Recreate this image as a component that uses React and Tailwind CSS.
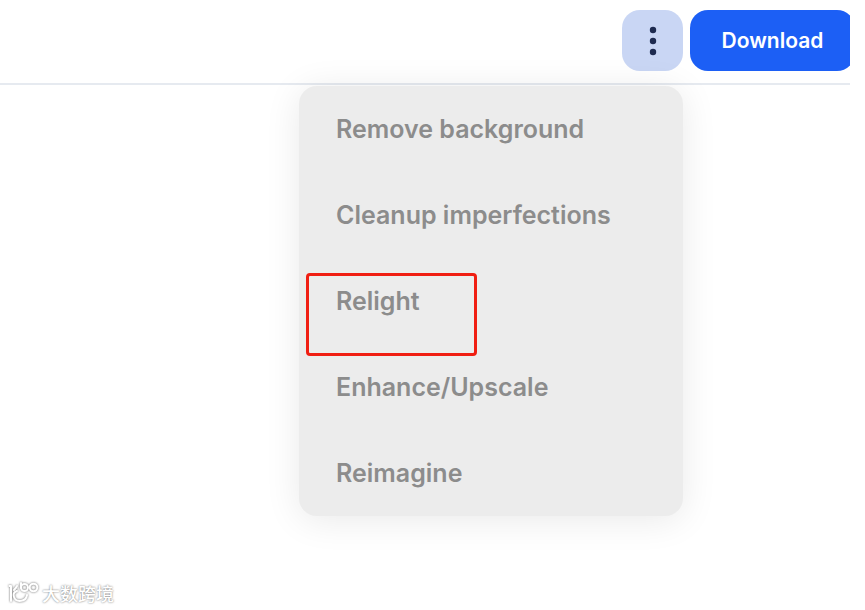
import React from 'react';

const menuItems = [
  "Remove background",
  "Cleanup imperfections",
  "Relight",
  "Enhance/Upscale",
  "Reimagine"
];

function DotsIcon() {
  return (
    <svg width="8" height="30" viewBox="0 0 8 30" fill="#1e2b50" aria-hidden="true">
      <circle cx="4" cy="4" r="3.2" />
      <circle cx="4" cy="15" r="3.2" />
      <circle cx="4" cy="26" r="3.2" />
    </svg>
  );
}

function ActionsMenu() {
  return (
    <ul className="absolute right-0 top-full mt-[15px] w-[384px] rounded-[18px] bg-[#ececec] shadow-[0_4px_36px_rgba(0,0,0,0.09)]">
      {menuItems.map((item) => (
        <li key={item} className="relative">
          <button
            type="button"
            className="flex h-[86px] w-full items-center pl-[37px] pt-0.5 text-left text-[25px] font-semibold text-[#8c8c8c]"
          >
            {item}
          </button>
          {item === "Relight" && (
            <span className="pointer-events-none absolute left-[7px] top-[15px] h-[83px] w-[171px] rounded-sm border-3 border-[#f01e12]" />
          )}
        </li>
      ))}
    </ul>
  );
}

function Watermark() {
  return (
    <div className="flex items-center gap-[3px] px-2 pb-[5px] text-white">
      <svg
        width="31"
        height="24"
        viewBox="0 0 31 24"
        fill="none"
        strokeLinecap="round"
        strokeLinejoin="round"
        aria-hidden="true"
        className="drop-shadow-[0_0_1px_rgba(0,0,0,0.6)]"
      >
        <g stroke="currentColor" strokeWidth="2">
          <path d="M1.5 5h1.5v15" />
          <path d="M9 5c-1 2-2 3-3 4" />
          <path d="M9 10c-3 1-4 3-3 6 2 6 12 5 13-2" />
          <path d="M13 2v5" />
          <circle cx="16.500" cy="6.500" r="3.500" />
          <circle cx="25.500" cy="6.500" r="3.800" />
        </g>
      </svg>
      <span className="font-['Noto_Sans_CJK_SC',sans-serif] text-lg font-medium leading-6 [text-shadow:0_0_2px_rgba(0,0,0,0.6)]">
        大数跨境
      </span>
    </div>
  );
}

export default function App() {
  return (
    <div className="flex min-h-screen flex-col justify-between bg-white font-[Inter,sans-serif]">
      {/* TOP BAR */}
      <header className="mr-[15px] flex justify-end gap-[7px] border-b-2 border-[#e6eaf0] pb-3 pt-[10px]">
        <div className="relative">
          <button
            type="button"
            aria-label="More actions"
            aria-expanded="true"
            className="flex h-[61px] w-[61px] items-center justify-center rounded-[18px] bg-[#c9d6f4]"
          >
            <DotsIcon />
          </button>
          <ActionsMenu />
        </div>
        {/* the button runs slightly past the end of the bar */}
        <div className="w-40 overflow-hidden">
          <button
            type="button"
            className="h-[61px] w-[165px] rounded-[18px] bg-[#1c5ff5] text-[21px] font-semibold text-white"
          >
            Download
          </button>
        </div>
      </header>

      <Watermark />
    </div>
  );
}
